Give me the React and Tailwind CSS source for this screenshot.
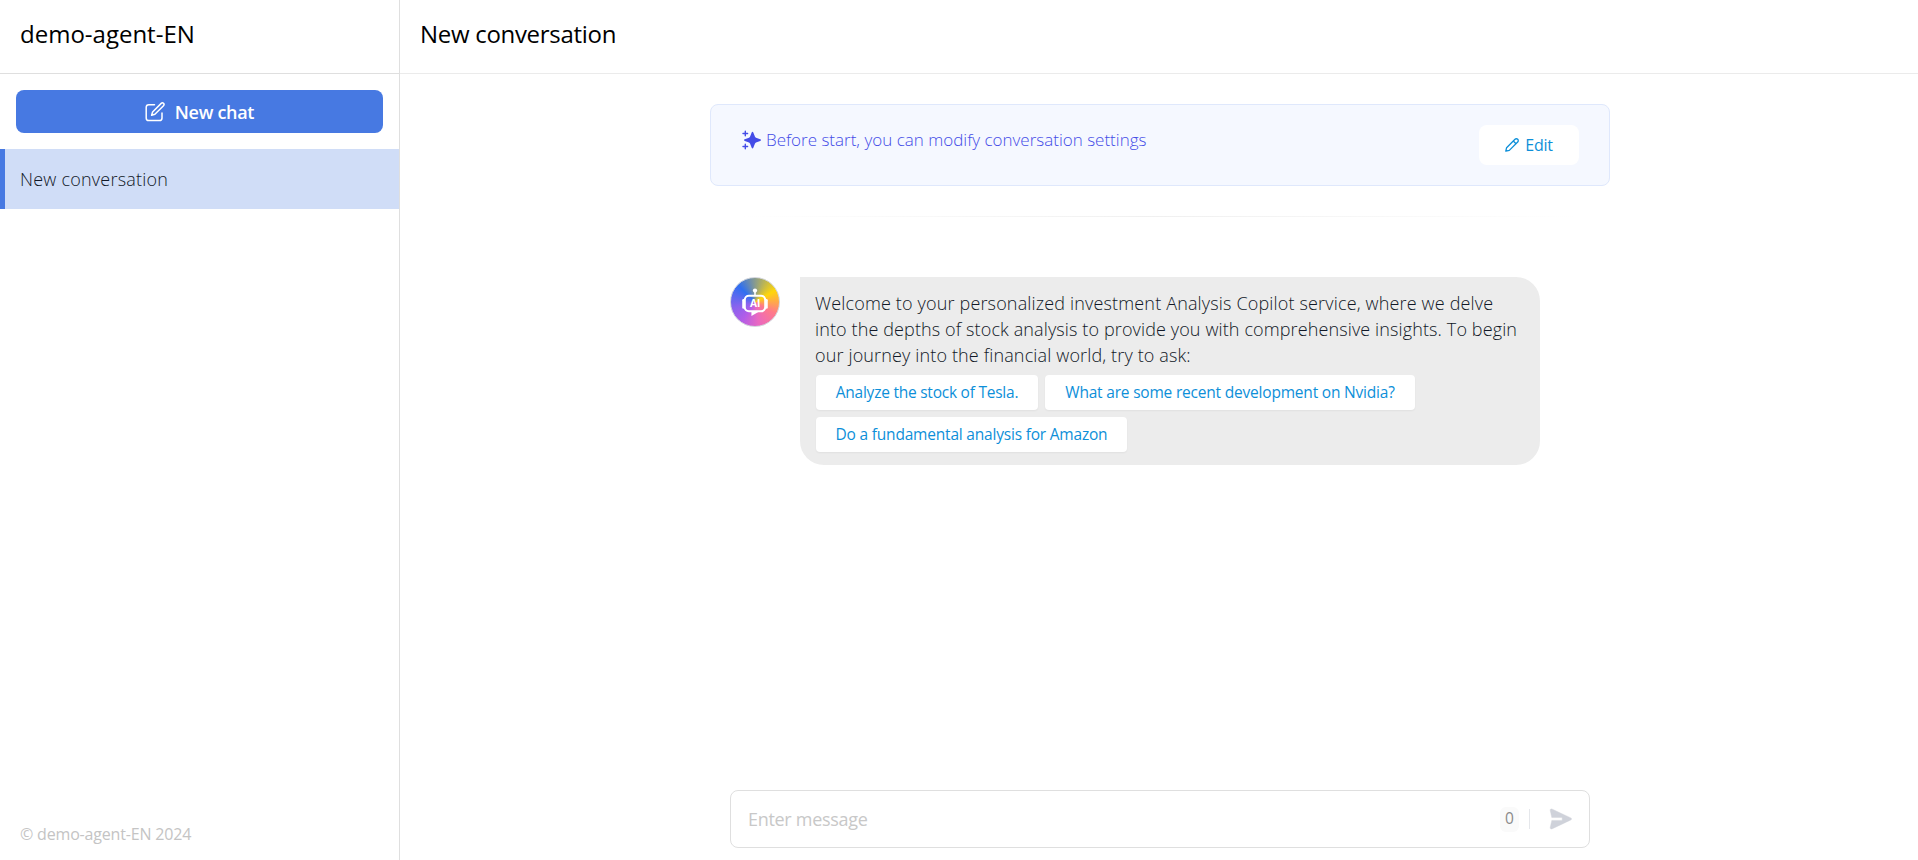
const chips = [
  { text: 'Analyze the stock of Tesla.', cls: 'w-[222px] tracking-[-0.24px]' },
  { text: 'What are some recent development on Nvidia?', cls: 'w-[370px] tracking-[-0.2px]' },
  { text: 'Do a fundamental analysis for Amazon', cls: 'w-[311px] tracking-[-0.2px]' },
];

function EditSquareIcon() {
  return (
    <svg className="h-5 w-5" viewBox="0 0 20 20" fill="none" stroke="currentColor" strokeWidth="1.5" strokeLinejoin="round" strokeLinecap="round">
      <path d="M9.5 2.7H3.8A2.6 2.6 0 0 0 1.2 5.3v10.6a2.6 2.6 0 0 0 2.6 2.6h10.6a2.6 2.6 0 0 0 2.6-2.6v-5" />
      <path d="M16.2 1.4a1.6 1.6 0 0 1 2.3 2.3l-8.6 8.6-3.3 1 1-3.3z" />
    </svg>
  );
}

function SparkleIcon() {
  return (
    <svg className="h-5 w-5" viewBox="0 0 20 20" fill="currentColor">
      <path d="M10.500 1.700c.4 0 .6.3.8.8l1.700 4.200c.2.5.5.8 1 1l4.200 1.600c.5.2.8.4.8.8s-.3.600-.8.800L14 12.500c-.5.2-.8.5-1 1l-1.700 4.200c-.2.5-.4.8-.8.8s-.6-.3-.8-.8L8 13.500c-.2-.5-.5-.8-1-1l-4.200-1.600c-.5-.2-.8-.4-.8-.8s.3-.6.8-.8L7 7.700c.5-.2.8-.5 1-1l1.700-4.200c.2-.5.4-.8.8-.8z" />
      <path d="M3.300 1.200v4.600M1 3.500h4.600M3.300 14.200v4.600M1 16.500h4.600" fill="none" stroke="currentColor" strokeWidth="1.400" strokeLinecap="round" />
    </svg>
  );
}

function PencilIcon() {
  return (
    <svg className="h-[14px] w-[14px]" viewBox="0 0 14 14" fill="none" stroke="currentColor" strokeWidth="1.300" strokeLinejoin="round">
      <path d="M10 1.300a1.900 1.900 0 0 1 2.700 2.700L4.300 12.400l-3.500.8.800-3.500z" />
      <path d="M8.300 3l2.700 2.700" />
    </svg>
  );
}

function Avatar() {
  return (
    <div className="flex h-[50px] w-[50px] shrink-0 items-center justify-center rounded-full border border-[#d3d6dd] bg-[conic-gradient(from_60deg,#ffd60a_0deg,#ff7a8a_60deg,#ea68c0_110deg,#b25de8_155deg,#8a63ee_195deg,#2f6ff0_255deg,#ffd60a_360deg)]">
      <svg className="h-12 w-12" viewBox="0 0 47 47">
        <circle cx="23.500" cy="12.300" r="2.100" fill="#fff" />
        <path d="M23.500 13v4" stroke="#fff" strokeWidth="1.500" />
        <rect x="11" y="20.500" width="2.500" height="9.500" rx="1.200" fill="#fff" />
        <rect x="33.500" y="20.500" width="2.500" height="9.500" rx="1.200" fill="#fff" />
        <rect x="13.500" y="17.300" width="20" height="15.300" rx="4" fill="none" stroke="#fff" strokeWidth="2" />
        <path d="M20 32.500h8l-8 4.700z" fill="#fff" />
        <text x="23.600" y="28.600" textAnchor="middle" className="fill-white font-['Open_Sans',sans-serif] text-[10px] font-bold">AI</text>
      </svg>
    </div>
  );
}

function SendIcon() {
  return (
    <svg className="h-[22px] w-[24px]" viewBox="0 0 24 22">
      <path d="M2.800 9.600L1.200 2.400C1 1.300 1.900.6 2.900 1l19 8.900c.9.500.9 1.500 0 2L2.900 20.900c-1 .4-1.900-.3-1.700-1.300l1.600-7.200h10.400V9.600z" fill="#cfd2da" stroke="#cfd2da" strokeWidth=".4" />
    </svg>
  );
}

export default function App() {
  return (
    <div className="flex h-[860px] w-full overflow-hidden bg-white font-['Open_Sans','Noto_Sans',sans-serif]">
      <aside className="flex w-[400px] shrink-0 flex-col border-r border-[#dfdfdf]">
        <header className="h-[74px] border-b border-[#dfdfdf] pt-[18px] pl-5 text-[24px] leading-8 text-black">
          demo-agent-EN
        </header>
        <div className="px-4 py-4">
          <button className="flex h-[43px] w-full items-center justify-center gap-[10px] rounded-lg bg-[#4779e2] pt-px text-[18px] font-semibold tracking-[-0.3px] text-white">
            <EditSquareIcon />
            <span>New chat</span>
          </button>
        </div>
        <div className="flex h-[60px] items-center border-l-5 border-[#4779e2] bg-[#d0ddf7] pl-[15px] text-[18px] font-light tracking-[0.22px] text-[#111827]">
          New conversation
        </div>
        <footer className="mt-auto pb-[14px] pl-5 text-[16px] leading-6 tracking-[-0.18px] text-[#c4c4c4]">© demo-agent-EN 2024</footer>
      </aside>
      <main className="flex min-w-0 flex-1 flex-col">
        <header className="h-[74px] border-b border-[#ebebeb] pt-[18px] pl-5 text-[24px] leading-8 tracking-[-0.3px] text-black">
          New conversation
        </header>
        <div className="mt-[30px] ml-[310px] flex w-[900px] flex-1 flex-col">
          <section className="flex h-[82px] items-start justify-between rounded-lg border border-[#dfe8fc] bg-[#f5f8ff] pt-5 pr-[30px] pl-[31px]">
            <div className="mt-px flex h-7 items-center gap-1 text-[17px] font-light text-[#444ce7]">
              <SparkleIcon />
              <span>Before start, you can modify conversation settings</span>
            </div>
            <button className="flex h-10 w-[100px] items-center justify-center gap-[6px] rounded-lg bg-white text-[16px] tracking-[-0.2px] text-[#0d8fd9]">
              <PencilIcon />
              <span>Edit</span>
            </button>
          </section>
          <div className="mx-8 mt-[30px] h-px bg-linear-to-r from-white via-[#f0f0f0] to-white" />
          <section className="mt-[60px] flex items-start gap-5 pl-5">
            <Avatar />
            <div className="h-[188px] w-[740px] rounded-3xl rounded-tl-none bg-[#ececec] pt-[13px] pl-[15px]">
              <p className="text-[18px] leading-[26px] font-light whitespace-nowrap text-[#111827]">
                <span className="block tracking-[0.16px]">Welcome to your personalized investment Analysis Copilot service, where we delve</span>
                <span className="block tracking-[0.12px]">into the depths of stock analysis to provide you with comprehensive insights. To begin</span>
                <span className="block tracking-[0.14px]">our journey into the financial world, try to ask:</span>
              </p>
              <div className="mt-[7px] ml-px flex flex-wrap gap-[7px]">
                {chips.map((c) => (
                  <button key={c.text} className={`h-[35px] rounded bg-white pt-px text-[15.5px] whitespace-nowrap text-[#0d8fd9] shadow-xs ${c.cls}`}>
                    {c.text}
                  </button>
                ))}
              </div>
            </div>
          </section>
          <div className="mx-5 mt-auto mb-3 flex h-[58px] items-center rounded-lg border border-[#dfdfdf] bg-white pr-4 pl-[17px]">
            <span className="flex-1 text-[18px] tracking-[-0.3px] text-[#c8c8c8]">Enter message</span>
            <span className="flex h-[25px] w-[19px] items-center justify-center rounded-md bg-[#fafafa] text-[15.5px] text-[#8a8a8a]">0</span>
            <span className="mr-[19px] ml-[10px] h-5 w-px bg-[#e5e7eb]" />
            <SendIcon />
          </div>
        </div>
      </main>
    </div>
  );
}
